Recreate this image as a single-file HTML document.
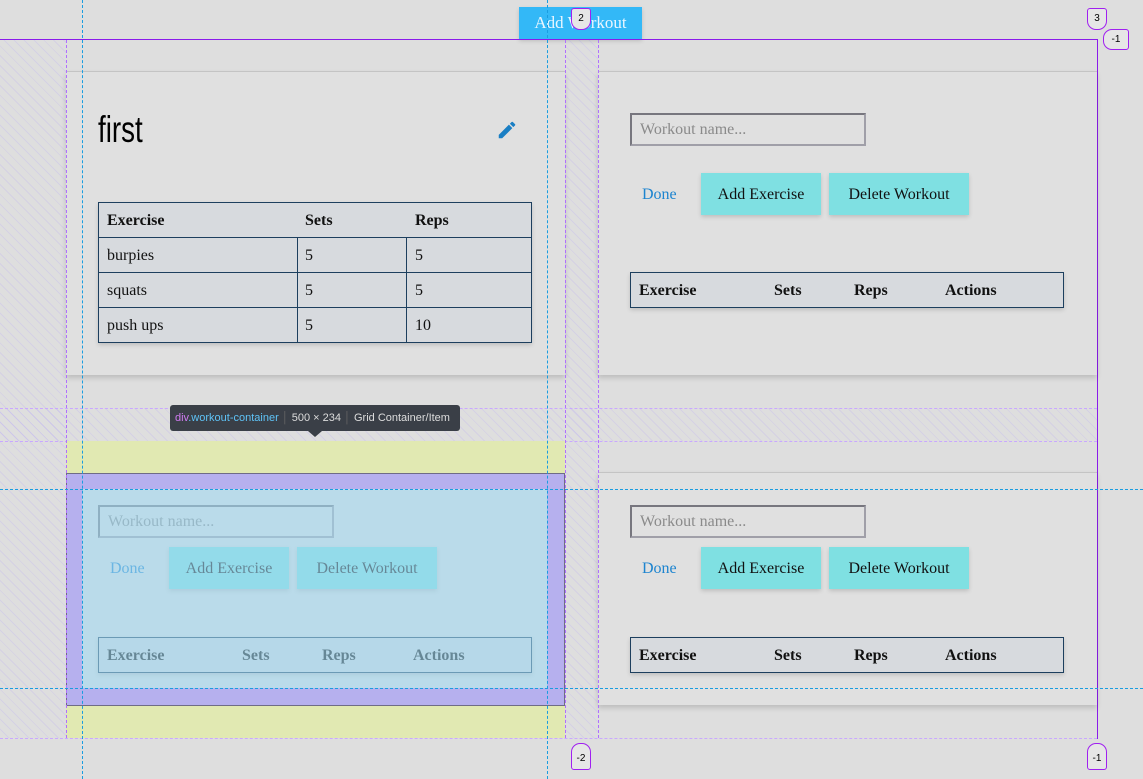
<!DOCTYPE html>
<html><head><meta charset="utf-8"><style>
*{box-sizing:border-box;margin:0;padding:0}
body{width:1143px;height:779px;background:#dedede;position:relative;overflow:hidden;font-family:"Liberation Serif",serif;color:#111}
.abs{position:absolute}
.hatch{background:repeating-linear-gradient(45deg,transparent 0 6px,rgba(170,150,255,.18) 6px 7px)}
.card{position:absolute;background:#e0e0e0;border-top:1px solid #c4c4c4;box-shadow:0 3px 5px rgba(0,0,0,.15)}
.tbl{position:absolute;border:1.5px solid #1d3f5e;background:#d7dade;box-shadow:0 2px 4px rgba(0,0,0,.15);font-size:16px}
.tbl .abs{margin-top:1px}
.inp{position:absolute;border:2px solid #77767e;width:236px;height:33px;font-size:16px;color:#8a8a8a;padding:6px 8px 4px;border-bottom-color:#a09fa8;border-right-color:#a09fa8}
.btn{position:absolute;background:#7fe0e2;height:42px;font-size:16px;line-height:44px;text-align:center;box-shadow:0 2px 4px rgba(0,0,0,.15)}
.done{position:absolute;color:#1d84cf;font-size:16px;margin-top:2px}
.badge{position:absolute;width:20px;height:22px;background:#e6e6e6;border:1.5px solid #a020f0;border-radius:3px;font:10px "Liberation Sans",sans-serif;text-align:center;line-height:20px;color:#000}
</style></head><body>
<div class="abs hatch" style="left:0;top:40px;width:66px;height:698px"></div>
<div class="abs hatch" style="left:565px;top:40px;width:33px;height:698px"></div>
<div class="abs hatch" style="left:0;top:408px;width:1097px;height:33px"></div>
<div class="abs" style="left:0;top:408px;width:1097px;border-top:1px dashed #c9a8ff"></div>
<div class="abs" style="left:0;top:441px;width:1097px;border-top:1px dashed #c9a8ff"></div>
<div class="abs" style="left:0;top:738px;width:1097px;border-top:1px dashed #c9a8ff"></div>

<div class="abs" style="left:519px;top:7px;width:123px;height:32px;background:#33b8f7;color:#eaf6ff;font-size:17px;line-height:31px;text-align:center;box-shadow:0 2px 4px rgba(0,0,0,.15)">Add Workout</div>
<div class="abs" style="left:0;top:39px;width:1098px;height:1px;background:#8a1bea"></div>
<div class="abs" style="left:1097px;top:39px;width:1px;height:700px;background:#8a1bea"></div>

<div class="card" style="left:66px;top:71px;width:499px;height:304px">
 <div class="abs" style="left:32px;top:37px;font:37px 'Liberation Sans Narrow','Liberation Sans',sans-serif;transform:scaleX(.75);transform-origin:left;color:#000">first</div>
 <svg class="abs" style="left:430px;top:47px" width="22" height="22" viewBox="0 0 24 24"><path fill="#1a7fc4" d="M3 17.25V21h3.75L17.81 9.94l-3.75-3.75L3 17.25zM20.71 7.04a1 1 0 0 0 0-1.41l-2.34-2.34a1 1 0 0 0-1.41 0l-1.830 1.83 3.75 3.75 1.83-1.83z"/></svg>
</div>
<div class="tbl" style="left:98px;top:202px;width:434px;height:141px">
 <div class="abs" style="left:0;top:34px;width:100%;border-top:1.5px solid #1d3f5e;margin:0"></div>
 <div class="abs" style="left:0;top:69px;width:100%;border-top:1.5px solid #1d3f5e;margin:0"></div>
 <div class="abs" style="left:0;top:104px;width:100%;border-top:1.5px solid #1d3f5e;margin:0"></div>
 <div class="abs" style="left:198px;top:34px;height:105px;border-left:1.5px solid #1d3f5e;margin:0"></div>
 <div class="abs" style="left:307px;top:34px;height:105px;border-left:1.5px solid #1d3f5e;margin:0"></div>
 <div class="abs" style="left:8px;top:8px;font-weight:bold">Exercise</div><div class="abs" style="left:206px;top:8px;font-weight:bold">Sets</div><div class="abs" style="left:316px;top:8px;font-weight:bold">Reps</div>
 <div class="abs" style="left:8px;top:43px">burpies</div><div class="abs" style="left:206px;top:43px">5</div><div class="abs" style="left:316px;top:43px">5</div>
 <div class="abs" style="left:8px;top:78px">squats</div><div class="abs" style="left:206px;top:78px">5</div><div class="abs" style="left:316px;top:78px">5</div>
 <div class="abs" style="left:8px;top:113px">push ups</div><div class="abs" style="left:206px;top:113px">5</div><div class="abs" style="left:316px;top:113px">10</div>
</div>

<div class="card" style="left:598px;top:71px;width:499px;height:304px"></div>
<div class="inp" style="left:630px;top:113px">Workout name...</div>
<div class="done" style="left:642px;top:184px">Done</div>
<div class="btn" style="left:701px;top:173px;width:120px">Add Exercise</div>
<div class="btn" style="left:829px;top:173px;width:140px">Delete Workout</div>
<div class="tbl" style="left:630px;top:272px;width:434px;height:36px;font-weight:bold">
 <div class="abs" style="left:8px;top:8px">Exercise</div><div class="abs" style="left:143px;top:8px">Sets</div><div class="abs" style="left:223px;top:8px">Reps</div><div class="abs" style="left:314px;top:8px">Actions</div>
</div>

<div class="card" style="left:598px;top:472px;width:499px;height:233px"></div>
<div class="inp" style="left:630px;top:505px">Workout name...</div>
<div class="done" style="left:642px;top:558px">Done</div>
<div class="btn" style="left:701px;top:547px;width:120px">Add Exercise</div>
<div class="btn" style="left:829px;top:547px;width:140px">Delete Workout</div>
<div class="tbl" style="left:630px;top:637px;width:434px;height:36px;font-weight:bold">
 <div class="abs" style="left:8px;top:8px">Exercise</div><div class="abs" style="left:143px;top:8px">Sets</div><div class="abs" style="left:223px;top:8px">Reps</div><div class="abs" style="left:314px;top:8px">Actions</div>
</div>

<div class="abs" style="left:66px;top:441px;width:499px;height:297px;background:#e1e9b2"></div>
<div class="abs" style="left:66px;top:473px;width:499px;height:233px;background:#b6b0ee;border:1px solid #6f6c86"></div>
<div class="abs" style="left:82px;top:489px;width:465px;height:199px;background:#e0e0e0"></div>
<div class="inp" style="left:98px;top:505px">Workout name...</div>
<div class="done" style="left:110px;top:558px">Done</div>
<div class="btn" style="left:169px;top:547px;width:120px">Add Exercise</div>
<div class="btn" style="left:297px;top:547px;width:140px">Delete Workout</div>
<div class="tbl" style="left:98px;top:637px;width:434px;height:36px;font-weight:bold">
 <div class="abs" style="left:8px;top:8px">Exercise</div><div class="abs" style="left:143px;top:8px">Sets</div><div class="abs" style="left:223px;top:8px">Reps</div><div class="abs" style="left:314px;top:8px">Actions</div>
</div>
<div class="abs" style="left:82px;top:489px;width:465px;height:199px;background:rgba(160,215,240,.6)"></div>

<div class="abs" style="left:66px;top:40px;height:698px;border-left:1px dashed #b070ff"></div>
<div class="abs" style="left:565px;top:40px;height:698px;border-left:1px dashed #b070ff"></div>
<div class="abs" style="left:598px;top:40px;height:698px;border-left:1px dashed #b070ff"></div>
<div class="abs" style="left:82px;top:0;height:779px;border-left:1px dashed #1a9de0"></div>
<div class="abs" style="left:547px;top:0;height:779px;border-left:1px dashed #1a9de0"></div>
<div class="abs" style="left:0;top:489px;width:1143px;border-top:1px dashed #1a9de0"></div>
<div class="abs" style="left:0;top:688px;width:1143px;border-top:1px dashed #1a9de0"></div>

<div class="abs" style="left:170px;top:405px;width:290px;height:26px;background:#3a3f47;border-radius:3px;font:11px 'Liberation Sans',sans-serif;color:#ddd;line-height:26px;padding-left:5px;white-space:nowrap">
<span style="color:#d17bf2">div</span><span style="color:#5fc3f7">.workout-container</span> <span style="color:#666">│</span> 500 × 234 <span style="color:#666">│</span> Grid Container/Item</div>
<div class="abs" style="left:308px;top:431px;border:7px solid transparent;border-top:6px solid #3a3f47;border-bottom:0"></div>

<div class="badge" style="left:571px;top:8px;border-radius:3px 3px 9px 9px">2</div>
<div class="badge" style="left:1087px;top:8px;border-radius:3px 3px 9px 9px">3</div>
<div class="badge" style="left:1103px;top:29px;width:26px;height:21px;border-radius:9px 3px 3px 9px">-1</div>
<div class="badge" style="left:571px;top:743px;height:27px;border-radius:9px 9px 3px 3px;line-height:30px">-2</div>
<div class="badge" style="left:1087px;top:743px;height:27px;border-radius:9px 9px 3px 3px;line-height:30px">-1</div>
</body></html>
